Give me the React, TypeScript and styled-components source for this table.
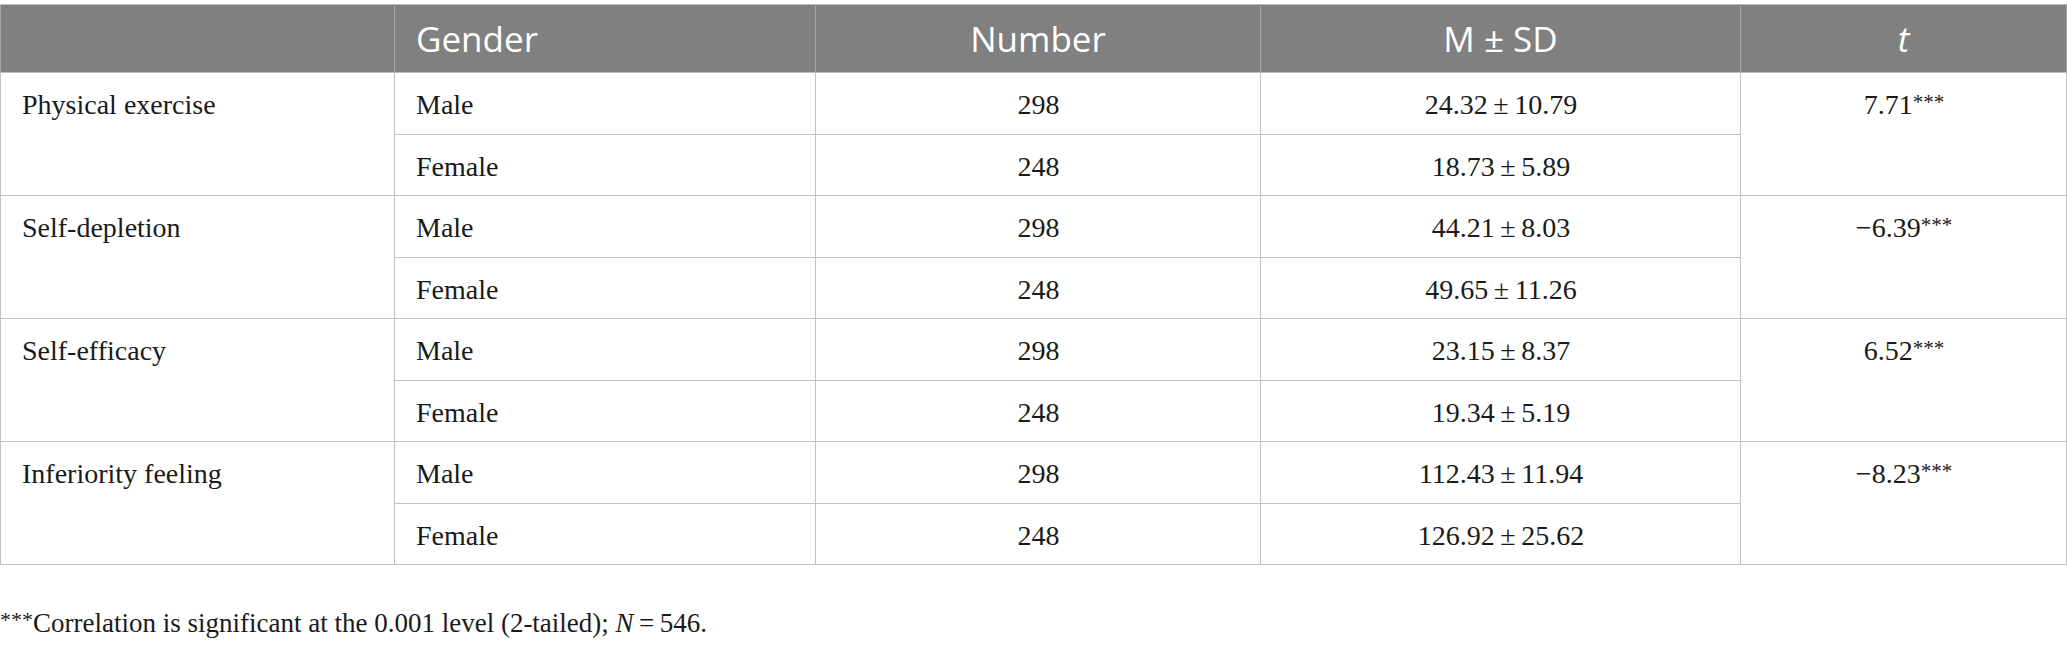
import React from "react";
import styled, { createGlobalStyle } from "styled-components";

const Global = createGlobalStyle`
  html, body { margin: 0; padding: 0; background: #ffffff; }
  body { font-family: "Liberation Serif", "Times New Roman", serif; color: #1a1a1a; }
`;

const Page = styled.div`
  padding-top: 4px;
  width: 2067px;
`;

const Table = styled.table`
  border-collapse: collapse;
  table-layout: fixed;
  width: 2066px;
  border: 1px solid #bdbdbd;
`;

const HeadCell = styled.th<{ $align?: string }>`
  background: #7f807f;
  color: #ffffff;
  font-family: "Open Sans", "Noto Sans", sans-serif;
  font-weight: 400;
  font-size: 35px;
  height: 67px;
  padding: 0 21px;
  text-align: ${(p) => p.$align || "center"};
  vertical-align: middle;
  border: 1px solid #a6a6a6;
  border-top: 1px solid #bdbdbd;
  border-bottom: 1px solid #bdbdbd;
`;

const Cell = styled.td<{ $align?: string; $h?: number }>`
  font-size: 28px;
  line-height: 34px;
  height: ${(p) => p.$h || 61}px;
  box-sizing: border-box;
  padding: 15px 20px 0 21px;
  text-align: ${(p) => p.$align || "center"};
  vertical-align: top;
  border: 1px solid #c2c2c2;
  color: #1a1a1a;
`;

const Stars = styled.sup<{ $size?: number }>`
  font-size: ${(p) => p.$size || 21}px;
  line-height: 0;
  vertical-align: 5px;
`;

const Ital = styled.i`
  font-style: italic;
`;

const Note = styled.p`
  margin: 42px 0 0 0;
  font-size: 27px;
  line-height: 32px;
  color: #1a1a1a;
`;

type Group = {
  name: string;
  rows: { gender: string; n: number; msd: string }[];
  t: string;
};

const groups: Group[] = [
  {
    name: "Physical exercise",
    rows: [
      { gender: "Male", n: 298, msd: "24.32\u2009±\u200910.79" },
      { gender: "Female", n: 248, msd: "18.73\u2009±\u20095.89" },
    ],
    t: "7.71",
  },
  {
    name: "Self-depletion",
    rows: [
      { gender: "Male", n: 298, msd: "44.21\u2009±\u20098.03" },
      { gender: "Female", n: 248, msd: "49.65\u2009±\u200911.26" },
    ],
    t: "\u22126.39",
  },
  {
    name: "Self-efficacy",
    rows: [
      { gender: "Male", n: 298, msd: "23.15\u2009±\u20098.37" },
      { gender: "Female", n: 248, msd: "19.34\u2009±\u20095.19" },
    ],
    t: "6.52",
  },
  {
    name: "Inferiority feeling",
    rows: [
      { gender: "Male", n: 298, msd: "112.43\u2009±\u200911.94" },
      { gender: "Female", n: 248, msd: "126.92\u2009±\u200925.62" },
    ],
    t: "\u22128.23",
  },
];

export default function App() {
  return (
    <Page>
      <Global />
      <Table>
        <colgroup>
          <col style={{ width: 394 }} />
          <col style={{ width: 421 }} />
          <col style={{ width: 445 }} />
          <col style={{ width: 480 }} />
          <col style={{ width: 326 }} />
        </colgroup>
        <thead>
          <tr>
            <HeadCell />
            <HeadCell $align="left">Gender</HeadCell>
            <HeadCell>Number</HeadCell>
            <HeadCell>M ± SD</HeadCell>
            <HeadCell>
              <Ital>t</Ital>
            </HeadCell>
          </tr>
        </thead>
        <tbody>
          {groups.map((g) =>
            g.rows.map((r, i) => (
              <tr key={g.name + r.gender}>
                {i === 0 && (
                  <Cell rowSpan={2} $align="left">
                    {g.name}
                  </Cell>
                )}
                <Cell $align="left" $h={i === 0 ? 62 : 61}>
                  {r.gender}
                </Cell>
                <Cell>{r.n}</Cell>
                <Cell>{r.msd}</Cell>
                {i === 0 && (
                  <Cell rowSpan={2}>
                    {g.t}
                    <Stars>***</Stars>
                  </Cell>
                )}
              </tr>
            ))
          )}
        </tbody>
      </Table>
      <Note>
        <Stars $size={22}>***</Stars>Correlation is significant at the 0.001 level (2-tailed);{" "}
        <Ital>N</Ital>
        {"\u2009=\u2009"}546.
      </Note>
    </Page>
  );
}
